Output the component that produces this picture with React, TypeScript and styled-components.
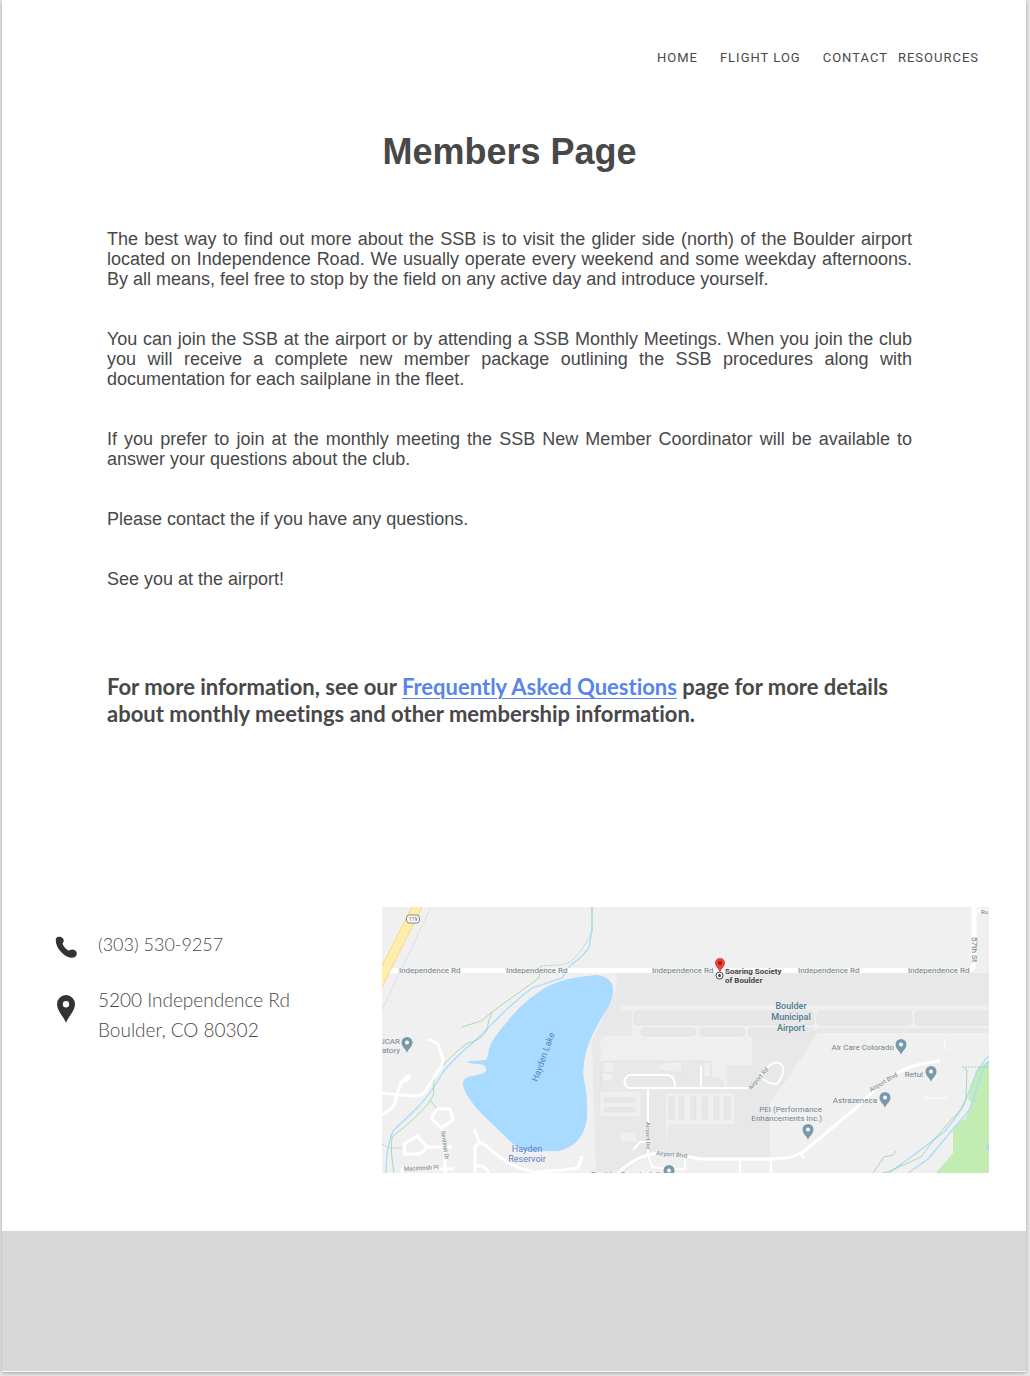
import React from "react";
import styled, { createGlobalStyle } from "styled-components";

const GlobalStyle = createGlobalStyle`
  *, *::before, *::after { box-sizing: border-box; }
  body {
    margin: 0;
    background: #e8e8e8;
    color: #484848;
    font-family: "Liberation Sans", Arial, sans-serif;
  }
`;

const Sheet = styled.div`
  margin: 0 4px 4px 2px;
  background: #fff;
  border-bottom: 1px solid #f8f8f8;
  box-shadow: 0 1px 4px rgba(0, 0, 0, 0.3);
`;

const Header = styled.header`
  display: flex;
  justify-content: flex-end;
  padding: 48px 47px 0;
`;

const Nav = styled.nav`
  display: flex;
`;

const NavLink = styled.a<{ $gap: number }>`
  margin-left: ${(p) => p.$gap}px;
  color: #484848;
  font-family: Roboto, sans-serif;
  font-size: 13px;
  line-height: 20px;
  letter-spacing: 1px;
  text-decoration: none;
`;

const Main = styled.main`
  padding: 60px 114px 0 105px;
`;

const Title = styled.h1`
  margin: 0;
  font-size: 36px;
  line-height: 48px;
  text-align: center;
`;

const Copy = styled.div`
  display: flex;
  flex-direction: column;
  gap: 40px;
  margin-top: 53px;
  font-size: 18px;
  line-height: 20px;
  text-align: justify;
`;

const Paragraph = styled.p`
  margin: 0;
`;

const Info = styled.p`
  margin: 84px 0 0;
  font-family: Lato, sans-serif;
  font-size: 22px;
  font-weight: 700;
  font-variant-ligatures: none;
  line-height: 27px;
`;

const InfoLink = styled.a`
  color: #5786e8;
  text-decoration: underline;
  text-decoration-thickness: 1px;
  text-underline-offset: 3px;
`;

const ContactSection = styled.section`
  display: flex;
  align-items: flex-start;
  padding: 180px 37px 58px 53px;
`;

const ContactList = styled.address`
  display: grid;
  grid-template-columns: 22px 1fr;
  column-gap: 21px;
  row-gap: 23px;
  flex: 0 0 327px;
  padding-top: 22px;
  font-family: Lato, sans-serif;
  font-size: 18px;
  font-style: normal;
  font-weight: 300;
  line-height: 30px;
`;

const Icon = styled.svg<{ $top: number }>`
  width: 22px;
  height: 28px;
  margin-top: ${(p) => p.$top}px;
  fill: #333;
`;

const PhoneLink = styled.a`
  color: inherit;
  text-decoration: none;
`;

const Street = styled.span`
  font-size: 19px;
`;

const MapFrame = styled.figure`
  flex: 1;
  min-width: 0;
  margin: 0;
`;

const MapDrawing = styled.svg`
  display: block;
  width: 100%;
  height: auto;
  font-family: Roboto, sans-serif;
  font-size: 8px;
  fill: #71858c;
`;

const Footer = styled.footer`
  height: 140px;
  background: #d8d8d8;
`;

const links = [
  { label: "HOME", gap: 0 },
  { label: "FLIGHT LOG", gap: 22 },
  { label: "CONTACT", gap: 22 },
  { label: "RESOURCES", gap: 10 },
];

const paragraphs = [
  "The best way to find out more about the SSB is to visit the glider side (north) of the Boulder airport located on Independence Road. We usually operate every weekend and some weekday afternoons. By all means, feel free to stop by the field on any active day and introduce yourself.",
  "You can join the SSB at the airport or by attending a SSB Monthly Meetings. When you join the club you will receive a complete new member package outlining the SSB procedures along with documentation for each sailplane in the fleet.",
  "If you prefer to join at the monthly meeting the SSB New Member Coordinator will be available to answer your questions about the club.",
  "Please contact the if you have any questions.",
  "See you at the airport!",
];

const places = [
  [407, 1045],
  [901, 1047],
  [931, 1074],
  [885, 1100],
  [808, 1132],
  [669, 1173],
];

function Place({ x, y }: { x: number; y: number }) {
  return (
    <g transform={`translate(${x} ${y})`}>
      <path d="M0 8C-1 4-5.500 2-5.500-2.500a5.500 5.500 0 0 1 11 0C5.500 2 1 4 0 8Z" fill="#7799aa" />
      <circle cy="-2.500" r="2" fill="#fff" />
    </g>
  );
}

function AreaMap() {
  return (
    <MapDrawing viewBox="382 907 607 266" role="img" aria-label="Map of Boulder Municipal Airport">
      <path d="M382 907h607v266H382z" fill="#f0f0f0" />
      <path d="M617 973H989V1033H818L790 1075L770 1102V1158H700L650 1154L622 1173H596L592 1040L601 1022L616 990Z" fill="#e8e8e8" />

      {/* taxiways and apron */}
      <g fill="#efefef">
        <path d="M621 1005H989V1028H818L812 1037H632V1011H621Z" />
        <path d="M600 1041L605 1036H752V1065H732Q727 1065 727 1070V1091H723V1081Q721 1078 711 1078V1061H601Z" />
        <path d="M600 1091H641V1117H600ZM665 1093H735V1125H672Q668 1125 668 1130V1141H665ZM620 1132H637V1142H620ZM604 1062H614V1072H604ZM602 1073H613V1081H602ZM659 1065L671 1062H682V1072H671L659 1069ZM704 1063H711V1077H704Z" stroke="#e2e2e2" strokeWidth=".6" />
      </g>
      <path d="M603 1091Q601 1088 601 1084V1064L604 1061H711V1078H719L723 1082V1092" fill="none" stroke="#dedede" strokeWidth=".6" />
      <g fill="#e7e7e7" stroke="#dedede" strokeWidth=".6">
        <rect x="634" y="1011" width="180" height="14" rx="4" />
        <rect x="817" y="1011" width="95" height="14" rx="4" />
        <rect x="915" y="1011" width="80" height="14" rx="4" />
        <rect x="641" y="1028" width="55" height="8" rx="4" />
        <rect x="699" y="1028" width="46" height="8" rx="4" />
        <rect x="748" y="1028" width="67" height="8" rx="4" />
        <path d="M604 1098H635V1102H604ZM604 1108H635V1112H604Z" />
        <path d="M669 1097h5v22h-5zM679 1097h5v22h-5zM691 1097h5v22h-5zM702 1097h5v22h-5zM714 1097h5v22h-5zM724 1097h6v22h-6z" />
      </g>

      {/* park */}
      <path d="M989 1060L976 1070L968 1099L972 1103L966 1118L953 1127V1153L936 1173H989Z" fill="#c3ecb2" />
      <path d="M989 1143Q984 1147 986 1150H989Z" fill="#a9daff" />

      {/* lake */}
      <path d="M597 975Q612 977 613 989Q614 1001 602 1017Q590 1037 586 1052Q582 1068 584 1080Q588 1097 587 1117Q585 1137 571 1146Q563 1151 555 1151H530Q520 1151 511 1142L482 1114Q465 1096 463 1085Q462 1077 473 1076L481 1074Q487 1073 486 1068Q485 1064 478 1064L468 1063Q467 1060 475 1061L486 1060Q488 1058 489 1049Q491 1042 495 1037Q506 1022 520 1007Q531 997 543 989Q563 977 597 975Z" fill="#a9daff" />

      {/* creeks */}
      <g fill="none" stroke="#a9daff" strokeWidth="1.300">
        <path d="M592 907V930L589 948L581 957L570 966L562 978Q544 984 532 988Q519 998 504 1012L476 1040Q455 1057 443 1072Q431 1094 416 1109L393 1131Q386 1147 386 1173" />
        <path d="M989 1056Q980 1063 972 1084Q963 1112 944 1132Q925 1147 889 1173M989 1062Q981 1069 976 1091Q971 1112 960 1121Q948 1135 928 1159L908 1173" />
      </g>

      {/* trails */}
      <g fill="none" stroke="#9bcfa6" strokeWidth=".8">
        <path d="M592 907V930Q589 942 571 962L560 965L541 966" strokeDasharray="2 1" />
        <path d="M541 966L539 978L492 1012L481 1021L462 1027M492 1012Q488 1020 487 1030Q482 1040 468 1043Q450 1056 440 1069Q431 1082 434 1093Q430 1107 392 1137Q390 1150 394 1173M430 1100L438 1110" />
        <path d="M382 1144L389 1148H402M962 1067H989" strokeDasharray="2 1" />
        <path d="M963 1067L967 1070L966 1099Q963 1110 953 1118Q934 1138 921 1157L890 1171L882 1173M873 1173L884 1157L893 1155L896 1151" />
      </g>

      {/* roads */}
      <g fill="none" stroke="#fff" strokeWidth="3" strokeLinejoin="round">
        <path d="M382 970.500H967Q974 970 974 962V907" strokeWidth="5" />
        <path d="M974 911H989" />
        <path d="M428 1039L438 1044L443 1059Q443 1065 437 1073L424 1093Q420 1096 411 1096L382 1093M382 1115Q393 1109 395 1103Q398 1088 402 1082Q411 1072 409 1078Q404 1083 399 1082" />
        <path d="M441 1128L432 1119Q432 1114 438 1109H450L453 1120L441 1128L445 1139V1173M452 1147H427Q422 1154 418 1154H405L404 1144L417 1136L427 1147M402 1173V1169H454M474 1129L479 1142Q484 1143 492 1151Q512 1168 535 1172L563 1170L578 1168L582 1156M475 1173V1148Q477 1142 483 1144M476 1166Q486 1165 489 1173M618 1173Q637 1155 658 1153L690 1157L700 1159H775Q799 1158 809 1147L855 1109Q879 1085 891 1077Q909 1064 940 1061" />
        <path d="M748 1088H628Q623 1084 625 1080Q626 1075 631 1075H665Q675 1074 675 1087M701 1066V1087M648 1089V1154M640 1142H648M633 1150L640 1142M648 1154L652 1167L666 1169H687M685 1156V1170M740 1159V1173M771 1159V1173M799 1152L804 1158" strokeWidth="2" />
        <path d="M750 1087L768 1067Q778 1058 783 1067Q785 1074 777 1084L769 1083L763 1079" strokeWidth="2" />
        <path d="M924 1096L925 1098H944L947 1096M944 1038L945 1048L948 1051" strokeWidth="1" />
      </g>

      {/* highway */}
      <path d="M382 987L422 907H412L382 966Z" fill="#ffedab" />
      <path d="M382 987L422 907M412 907L382 966" fill="none" stroke="#f6d66e" strokeWidth=".8" />
      <path d="M431 907L382 1010" fill="none" stroke="#dadada" strokeWidth=".8" />
      <rect x="406.500" y="915" width="13" height="8" rx="3" fill="#fff" stroke="#666" strokeWidth=".8" />
      <text x="413" y="921" fontSize="5" textAnchor="middle" fill="#444">119</text>

      <g stroke="#f0f0f0" strokeWidth="1.500" paintOrder="stroke">
        <text x="399" y="973">Independence Rd</text>
        <text x="506" y="973">Independence Rd</text>
        <text x="652" y="973">Independence Rd</text>
        <text x="798" y="973">Independence Rd</text>
        <text x="908" y="973">Independence Rd</text>
        <text x="981" y="914" fontSize="6">Ru</text>
        <text transform="translate(972 937) rotate(90)">57th St</text>
        <text transform="translate(441 1131) rotate(82)" fontSize="6">Sentinel Dr</text>
        <text transform="translate(404 1171) rotate(-3)" fontSize="6">Macintosh Pl</text>
        <text transform="translate(646 1122) rotate(90)" fontSize="6">Airport Rd</text>
        <text transform="translate(751 1090) rotate(-49)" fontSize="6">Airport Rd</text>
        <text transform="translate(656 1155) rotate(5)" fontSize="6">Airport Blvd</text>
        <text transform="translate(871 1092) rotate(-31)" fontSize="6">Airport Blvd</text>
      </g>

      <text x="591" y="1177">Boulder County Jail</text>
      {places.map(([x, y]) => (
        <Place key={x} x={x} y={y} />
      ))}
      <text x="400" y="1044" textAnchor="end">UCAR</text>
      <text x="400" y="1053" textAnchor="end">atory</text>
      <text x="894" y="1050" textAnchor="end">Air Care Colorado</text>
      <text x="923" y="1077" textAnchor="end">Retul</text>
      <text x="877" y="1103" textAnchor="end">Astrazeneca</text>
      <text x="822" y="1112" textAnchor="end">PEI (Performance</text>
      <text x="822" y="1121" textAnchor="end">Enhancements Inc.)</text>

      <g fontSize="9" textAnchor="middle" fill="#5583c8">
        <text transform="translate(546 1058) rotate(-70)">Hayden Lake</text>
        <text x="527" y="1152">Hayden</text>
        <text x="527" y="1162">Reservoir</text>
      </g>
      <g fontSize="9" fontWeight="500" textAnchor="middle" fill="#4d7d8f">
        <text x="791" y="1009">Boulder</text>
        <text x="791" y="1020">Municipal</text>
        <text x="791" y="1031">Airport</text>
      </g>

      <circle cx="719.500" cy="975.500" r="3.500" fill="#fff" stroke="#444" />
      <circle cx="719.500" cy="975.500" r="1.500" fill="#444" />
      <path d="M720 973C719 968 715 967 715 963a5 5 0 0 1 10 0C725 967 721 968 720 973Z" fill="#e8453c" />
      <circle cx="720" cy="963" r="2" fill="#951f18" />
      <g fontSize="8" fontWeight="700" fill="#444" stroke="#f0f0f0" strokeWidth="1" paintOrder="stroke">
        <text x="725" y="974">Soaring Society</text>
        <text x="725" y="983">of Boulder</text>
      </g>
    </MapDrawing>
  );
}

export default function App() {
  return (
    <>
      <GlobalStyle />
      <Sheet>
        <Header>
          <Nav aria-label="Main">
            {links.map((link) => (
              <NavLink key={link.label} href="#" $gap={link.gap}>
                {link.label}
              </NavLink>
            ))}
          </Nav>
        </Header>
        <Main>
          <Title>Members Page</Title>
          <Copy>
            {paragraphs.map((text) => (
              <Paragraph key={text}>{text}</Paragraph>
            ))}
          </Copy>
          <Info>
            For more information, see our <InfoLink href="#faq">Frequently Asked Questions</InfoLink> page for more
            details about monthly meetings and other membership information.
          </Info>
        </Main>
        <ContactSection>
          <ContactList>
            <Icon $top={5} viewBox="0 0 22 28" aria-hidden="true">
              <path d="M1 4.500C2 2.500 6 2 8 4.500C9.500 7 8.500 8 7.500 9.500C8 12 11.500 16 14 16.500C16 15.500 17.500 15 19.500 16C22.500 17.500 22.500 21 20 23C17 25 11 23 6.500 18.500C2 14 0 8 1 4.500Z" />
            </Icon>
            <PhoneLink href="tel:+13035309257">(303) 530-9257</PhoneLink>
            <Icon $top={10} viewBox="0 0 22 28" aria-hidden="true">
              <path
                fillRule="evenodd"
                d="M11 28C9 22 2 16 2 9a9 9 0 0 1 18 0C20 16 13 22 11 28ZM11 12.500a3.200 3.200 0 1 0 0-6.400a3.200 3.200 0 0 0 0 6.400Z"
              />
            </Icon>
            <Street>
              5200 Independence Rd
              <br />
              Boulder, CO 80302
            </Street>
          </ContactList>
          <MapFrame>
            <AreaMap />
          </MapFrame>
        </ContactSection>
        <Footer />
      </Sheet>
    </>
  );
}
